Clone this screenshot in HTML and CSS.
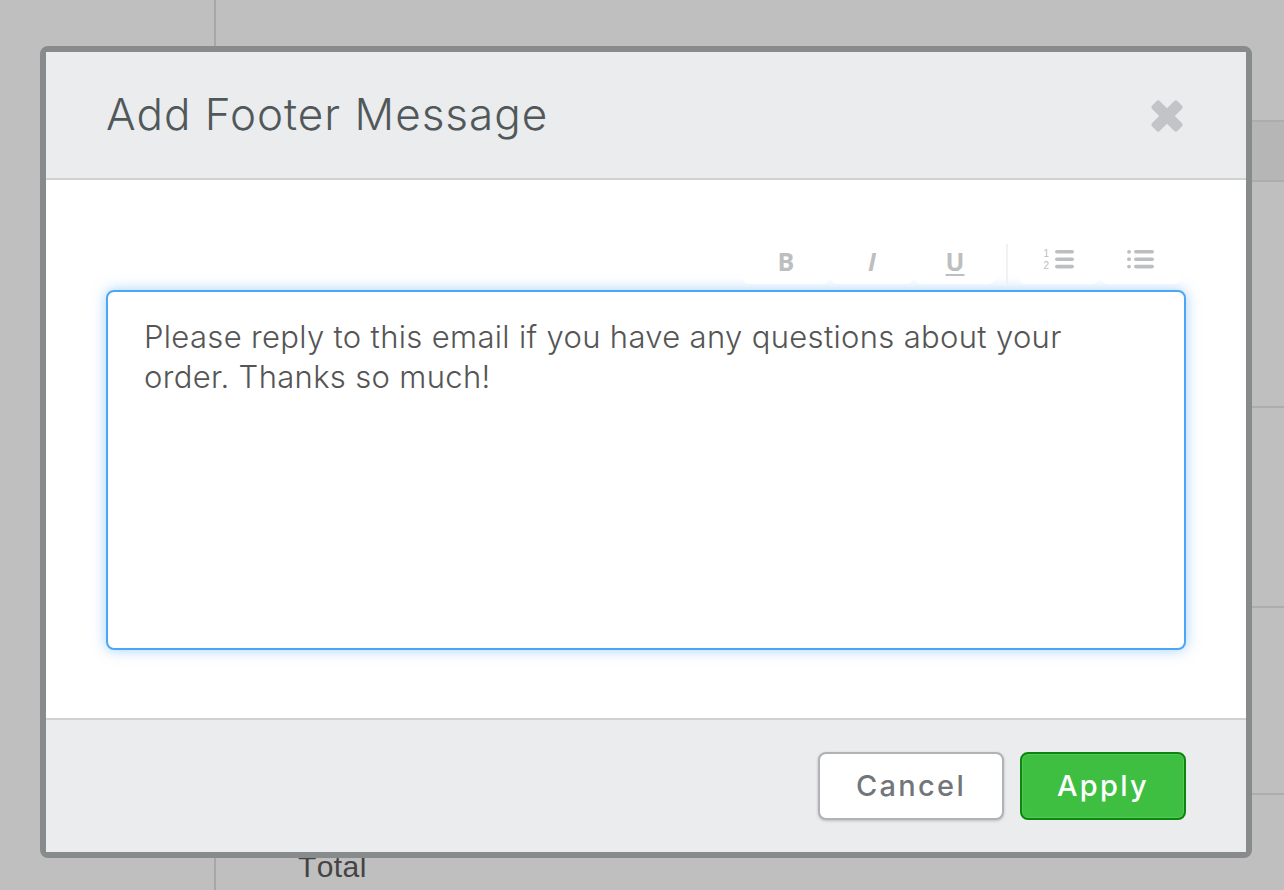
FILE: index.html
```html
<!DOCTYPE html>
<html lang="en">
<head>
    <meta charset="UTF-8">
    <meta name="viewport" content="width=device-width, initial-scale=1.0">
    <title>Add Footer Message</title>
    <link rel="stylesheet" href="styles.css">
</head>
<body>
    <!-- page behind the overlay -->
    <div class="page">
        <div class="page-side"></div>
        <div class="page-main">
            <div class="row row-first"></div>
            <div class="row row-head"></div>
            <div class="row row-a"></div>
            <div class="row row-b"></div>
            <div class="row row-c"></div>
            <div class="row row-total">Total</div>
        </div>
    </div>

    <div class="modal">
        <header class="modal-head">
            <h1 class="modal-title">Add Footer Message</h1>
            <button class="close-btn" aria-label="Close">
                <svg width="34" height="34" viewBox="0 0 34 34">
                    <rect x="-1" y="11.5" width="36" height="11" rx="2.5" transform="rotate(45 17 17)"/>
                    <rect x="-1" y="11.5" width="36" height="11" rx="2.5" transform="rotate(-45 17 17)"/>
                </svg>
            </button>
        </header>

        <div class="modal-body">
            <div class="toolbar">
                <button class="tool tool-b">B</button>
                <button class="tool tool-i">I</button>
                <button class="tool tool-u">U</button>
                <span class="tool-sep"></span>
                <button class="tool tool-list" aria-label="Numbered list">
                    <svg width="32" height="24" viewBox="0 0 32 24">
                        <text class="list-num" x="0.5" y="10">1</text>
                        <text class="list-num" x="0.5" y="21.5">2</text>
                        <rect x="12" y="3" width="19" height="3.6" rx="1.8"/>
                        <rect x="12" y="10.4" width="19" height="3.6" rx="1.8"/>
                        <rect x="12" y="17.8" width="19" height="3.6" rx="1.8"/>
                    </svg>
                </button>
                <button class="tool tool-list" aria-label="Bulleted list">
                    <svg width="28" height="24" viewBox="0 0 28 24">
                        <circle cx="2" cy="4.8" r="1.9"/>
                        <circle cx="2" cy="12.2" r="1.9"/>
                        <circle cx="2" cy="19.6" r="1.9"/>
                        <rect x="7" y="3" width="20" height="3.6" rx="1.8"/>
                        <rect x="7" y="10.4" width="20" height="3.6" rx="1.8"/>
                        <rect x="7" y="17.8" width="20" height="3.6" rx="1.8"/>
                    </svg>
                </button>
            </div>
            <textarea class="message">Please reply to this email if you have any questions about your order. Thanks so much!</textarea>
        </div>

        <footer class="modal-foot">
            <button class="btn btn-cancel">Cancel</button>
            <button class="btn btn-apply">Apply</button>
        </footer>
    </div>
</body>
</html>
```

FILE: styles.css
```css
* {
    box-sizing: border-box;
}

html, body {
    height: 100%;
}

body {
    margin: 0;
    overflow: hidden;
    background-color: #bfbfbf;
    font-family: Inter, Lato, sans-serif;
}

/* page behind the overlay */
.page {
    display: flex;
    height: 890px;
}

.page-side {
    width: 216px;
    border-right: 2px solid #a8a8a8;
}

.page-main {
    flex: 1;
    display: flex;
    flex-direction: column;
}

.row {
    border-bottom: 2px solid #adadad;
}

.row-first { height: 122px; }
.row-head { height: 60px; background-color: #b5b6b5; }
.row-a { height: 226px; }
.row-b { height: 200px; }
.row-c { height: 187px; }

.row-total {
    flex: 1;
    border-bottom: none;
    padding: 55px 0 0 82px;
    font-family: "Liberation Sans", Arial, sans-serif;
    font-size: 30px;
    line-height: 34px;
    font-kerning: none;
    letter-spacing: 0.4px;
    color: #444;
}

/* modal */
.modal {
    position: absolute;
    left: 40px;
    top: 46px;
    width: 1212px;
    height: 812px;
    display: flex;
    flex-direction: column;
    border: 6px solid #888b8b;
    border-radius: 8px;
    background-color: #fff;
}

.modal-head {
    height: 128px;
    display: flex;
    align-items: center;
    justify-content: space-between;
    padding: 0 62px 0 60px;
    background-color: #ebecee;
    border-bottom: 2px solid #d0d1d2;
}

.modal-title {
    margin: 0 0 2px;
    font-size: 44px;
    font-weight: 300;
    letter-spacing: 1px;
    color: #51585a;
}

.close-btn {
    width: 34px;
    height: 34px;
    margin-top: 2px;
    padding: 0;
    border: none;
    background: none;
    fill: #c2c5c7;
}

.modal-body {
    flex: 1;
    padding: 64px 60px 0;
}

.toolbar {
    position: relative;
    z-index: 1;
    height: 46px;
    display: flex;
    justify-content: flex-end;
    padding-right: 4px;
}

.tool {
    height: 40px;
    width: 82px;
    padding: 0 0 12px;
    border: none;
    border-radius: 0 0 8px 8px;
    background-color: #fff;
    color: #bcbec0;
    font-family: "Open Sans", sans-serif;
    font-size: 25px;
    font-weight: 700;
    fill: #bcbec0;
}

.tool-b {
    width: 88px;
}

.tool-i {
    width: 84px;
    font-style: italic;
}

.tool-u {
    text-decoration: underline;
    text-underline-offset: 3px;
}

.tool-list {
    padding: 0 0 10px;
}

.tool-sep {
    width: 2px;
    height: 40px;
    margin: 0 10px;
    background-color: #f1f1f2;
}

.list-num {
    font-family: "Liberation Sans", sans-serif;
    font-size: 10px;
    font-weight: 400;
}

.message {
    display: block;
    width: 100%;
    height: 360px;
    padding: 25px 36px;
    border: 2px solid #4da6f5;
    border-radius: 8px;
    outline: none;
    resize: none;
    box-shadow: 0 0 14px rgba(77, 166, 245, 0.5);
    font-family: inherit;
    font-size: 31px;
    font-weight: 300;
    letter-spacing: 0.33px;
    line-height: 40px;
    color: #555;
}

.modal-foot {
    height: 134px;
    display: flex;
    justify-content: flex-end;
    gap: 16px;
    padding: 32px 60px 0;
    background-color: #ebecee;
    border-top: 2px solid #d0d1d2;
}

.btn {
    height: 68px;
    padding: 0 0 2px;
    border-radius: 8px;
    font-family: inherit;
    font-size: 29px;
    font-weight: 500;
    letter-spacing: 2.3px;
}

.btn-cancel {
    width: 186px;
    border: 2px solid #b1b2b6;
    background-color: #fff;
    color: #72767b;
    box-shadow: 0 1px 3px rgba(0, 0, 0, 0.2);
}

.btn-apply {
    width: 166px;
    border: 2px solid #0a860f;
    background-color: #3ebf41;
    color: #fff;
    box-shadow: inset 0 0 0 1px #54c957;
}
```
